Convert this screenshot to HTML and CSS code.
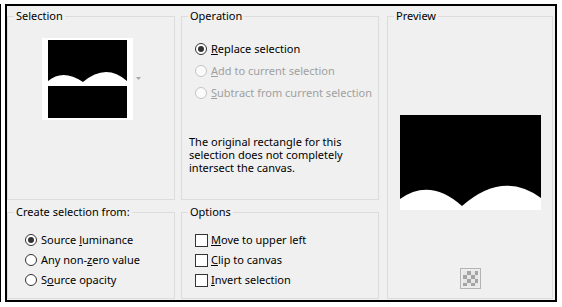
FILE: index.html
```html
<!DOCTYPE html>
<html lang="en">
<head>
  <meta charset="UTF-8">
  <meta name="viewport" content="width=device-width, initial-scale=1.0">
  <title>Load Selection From Alpha</title>
  <link rel="stylesheet" href="styles.css">
</head>
<body>
  <div class="frame">
  <div class="dialog">
    <div class="col colLeft">
      <fieldset class="group groupSel">
        <legend>Selection</legend>
        <div class="thumbRow">
          <div class="thumb">
            <svg width="79" height="78" viewBox="0 0 79 78">
              <rect width="79" height="78" fill="#000"/>
              <path d="M0,41 Q15,28.5 35,42 Q58,22.5 79,41 V46 H0 Z" fill="#fff"/>
            </svg>
          </div>
          <svg class="drop" width="5" height="3" viewBox="0 0 5 3"><path d="M0,0 H5 L2.5,3 Z" fill="#a8a8a8"/></svg>
        </div>
      </fieldset>
      <fieldset class="group groupCreate">
        <legend>Create selection from:</legend>
        <ul class="list">
          <li><label><input type="radio" name="src" checked><span>Source <u>l</u>uminance</span></label></li>
          <li><label><input type="radio" name="src"><span>Any non-<u>z</u>ero value</span></label></li>
          <li><label><input type="radio" name="src"><span>S<u>o</u>urce opacity</span></label></li>
        </ul>
      </fieldset>
    </div>
    <div class="col colMid">
      <fieldset class="group groupOp">
        <legend>Operation</legend>
        <ul class="list ops">
          <li><label><input type="radio" name="op" checked><span><u>R</u>eplace selection</span></label></li>
          <li class="off"><label><input type="radio" name="op" disabled><span><u>A</u>dd to current selection</span></label></li>
          <li class="off"><label><input type="radio" name="op" disabled><span><u>S</u>ubtract from current selection</span></label></li>
        </ul>
        <p class="note">The original rectangle for this selection does not completely intersect the canvas.</p>
      </fieldset>
      <fieldset class="group groupOpts">
        <legend>Options</legend>
        <ul class="list checks">
          <li><label><input type="checkbox"><span><u>M</u>ove to upper left</span></label></li>
          <li><label><input type="checkbox"><span><u>C</u>lip to canvas</span></label></li>
          <li><label><input type="checkbox"><span><u>I</u>nvert selection</span></label></li>
        </ul>
      </fieldset>
    </div>
    <fieldset class="group groupPreview">
      <legend>Preview</legend>
      <svg class="previewImg" width="141" height="95" viewBox="0 0 141 95">
        <rect width="141" height="95" fill="#000"/>
        <path d="M0,84 Q30,62.5 62,91 Q103,55 141,83 V95 H0 Z" fill="#fff"/>
      </svg>
      <div class="checker"><span></span></div>
    </fieldset>
  </div>
  </div><!--//frame-->
</body>
</html>
```

FILE: styles.css
```css
* {margin:0; padding:0; box-sizing:border-box;}
body {background:#fff; font:11px/16px "Noto Sans", sans-serif; color:#000;}

.frame {width:557px; margin-top:4px; padding-left:4px; border-left:1px solid #000;}
.dialog {display:flex; gap:6px; width:552px; height:298px; padding:2px 2px 1px 0; border:2px solid #000; background:#f0f0f0;}
.col {display:flex; flex-direction:column; gap:4px;}
.colLeft {width:168px;}
.colMid {width:198px;}

.group {border:1px solid #dcdcdc; padding:0 6px; min-width:0;}
.group legend {padding:0 2px; line-height:16px;}
.groupSel, .groupOp {height:192px;}
.groupCreate, .groupOpts {height:95px;}
.groupPreview {width:166px; height:291px; margin-left:2px; display:flex; flex-direction:column; align-items:center;}

.thumbRow {display:flex; align-items:center; margin:14px 0 0 28px;}
.thumb {width:91px; height:82px; padding:2px 6px; background:#fff;}
.thumb svg {display:block;}
.drop {margin-left:3px; margin-top:-2px;}

.list {list-style:none;}
.list li {display:flex; align-items:center; height:20px;}
.list label {display:flex; align-items:center; gap:4px; white-space:nowrap;}
.groupCreate .list {margin:10px 0 0 11px;}
.ops {margin:14px 0 0 7px;}
.ops li {height:22px;}
.ops li.off {color:#a0a0a0;}
.checks {margin:10px 0 0 7px;}
.checks label {gap:3px;}

input[type="radio"], input[type="checkbox"] {-webkit-appearance:none; appearance:none; margin:0; background:#fff; border:1px solid #333; flex:none;}
input[type="radio"] {width:12px; height:12px; border-radius:50%; display:grid; place-items:center;}
input[type="radio"]:checked::before {content:''; width:6px; height:6px; border-radius:50%; background:#333;}
input[type="radio"]:disabled {border-color:#c4c4c4; background:#fbfbfb;}
input[type="checkbox"] {width:13px; height:13px;}

.note {margin:31px 0 0 1px; line-height:13px;}

.previewImg {display:block; margin-top:91px;}
.checker {width:21px; height:21px; margin-top:auto; margin-bottom:9px; border:1px solid #b4b4b4; padding:2px; background:#ececec;}
.checker span {display:block; width:100%; height:100%; background:repeating-conic-gradient(#a4a4a4 0 25%, #e6e6e6 0 50%) 0 0/8px 8px;}
```
